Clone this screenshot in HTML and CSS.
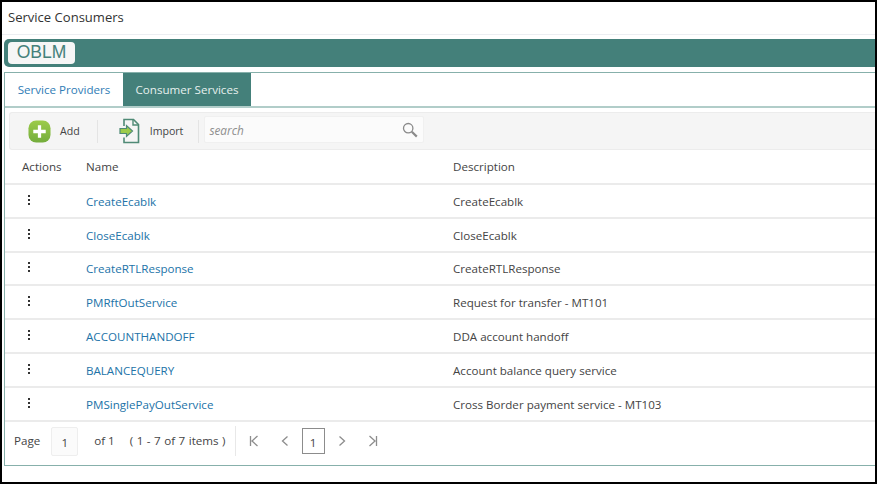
FILE: index.html
```html
<!DOCTYPE html>
<html lang="en">
<head>
<meta charset="utf-8">
<title>Service Consumers</title>
<link rel="stylesheet" href="styles.css">
</head>
<body>
<div class="frame">
  <header class="title">Service Consumers</header>
  <div class="banner"><span class="logo">OBLM</span></div>
  <section class="panel">
    <nav class="tabs">
      <a class="tab">Service Providers</a>
      <a class="tab active">Consumer Services</a>
    </nav>
    <div class="toolbar">
      <button class="tool tool-add">
        <svg class="ico-add" viewBox="0 0 24 24" width="23" height="23"><defs><linearGradient id="g" x1="0" y1="0" x2="0" y2="1"><stop offset="0" stop-color="#9ccb4a"/><stop offset="1" stop-color="#74ad3c"/></linearGradient></defs><rect x="0.5" y="0.5" width="23" height="23" rx="8" fill="url(#g)"/><path d="M12 5.5v13M5.5 12h13" stroke="#fff" stroke-width="3.4" fill="none"/></svg>
        <span>Add</span>
      </button>
      <i class="sep"></i>
      <button class="tool tool-import">
        <svg viewBox="0 0 21 26" width="21" height="26"><path d="M5 8V1.500h9.500l5 5V24.500H5v-5" fill="none" stroke="#4f8a76" stroke-width="1.600"/><path d="M14 1.500v5.500h5.500" fill="none" stroke="#4f8a76" stroke-width="1.400"/><path d="M1 10.500h6.500V7.500l6 5.500-6 5.500v-3H1z" fill="#9ccb4a" stroke="#4f8a76" stroke-width="1.200"/></svg>
        <span>Import</span>
      </button>
      <i class="sep sep-b"></i>
      <div class="search">
        <span class="placeholder">search</span>
        <svg viewBox="0 0 16 16" width="16" height="16"><circle cx="6.200" cy="6.200" r="4.700" fill="none" stroke="#8a8a8a" stroke-width="1.300"/><path d="M9.800 9.800l5 4.800" stroke="#8a8a8a" stroke-width="2.200"/></svg>
      </div>
    </div>
    <div class="table">
      <div class="row head"><span>Actions</span><span>Name</span><span>Description</span></div>
      <div class="row"><span class="dots"><i></i><i></i><i></i></span><a>CreateEcablk</a><span>CreateEcablk</span></div>
      <div class="row"><span class="dots"><i></i><i></i><i></i></span><a>CloseEcablk</a><span>CloseEcablk</span></div>
      <div class="row"><span class="dots"><i></i><i></i><i></i></span><a>CreateRTLResponse</a><span>CreateRTLResponse</span></div>
      <div class="row"><span class="dots"><i></i><i></i><i></i></span><a>PMRftOutService</a><span>Request for transfer - MT101</span></div>
      <div class="row"><span class="dots"><i></i><i></i><i></i></span><a>ACCOUNTHANDOFF</a><span>DDA account handoff</span></div>
      <div class="row"><span class="dots"><i></i><i></i><i></i></span><a>BALANCEQUERY</a><span>Account balance query service</span></div>
      <div class="row"><span class="dots"><i></i><i></i><i></i></span><a>PMSinglePayOutService</a><span>Cross Border payment service - MT103</span></div>
    </div>
    <footer class="pager">
      <span class="pg-label">Page</span>
      <span class="pg-input">1</span>
      <span class="pg-of">of 1</span>
      <span class="pg-items">( 1 - 7 of 7 items )</span>
      <i class="pg-sep"></i>
      <svg class="nav nav-first" viewBox="0 0 10 12" width="10" height="12"><path d="M1.500 1v10M8.500 1L3 6l5.500 5" fill="none" stroke="#8d8d8d" stroke-width="1.300"/></svg>
      <svg class="nav nav-prev" viewBox="0 0 8 12" width="8" height="12"><path d="M6.500 1.500L1.500 6l5 4.500" fill="none" stroke="#8d8d8d" stroke-width="1.300"/></svg>
      <span class="pg-current">1</span>
      <svg class="nav nav-next" viewBox="0 0 8 12" width="8" height="12"><path d="M1.500 1.500L6.500 6l-5 4.500" fill="none" stroke="#8d8d8d" stroke-width="1.300"/></svg>
      <svg class="nav nav-last" viewBox="0 0 10 12" width="10" height="12"><path d="M8.500 1v10M1.500 1L7 6l-5.500 5" fill="none" stroke="#8d8d8d" stroke-width="1.300"/></svg>
    </footer>
  </section>
</div>
</body>
</html>
```
FILE: styles.css
```css
* { box-sizing: border-box; }
html, body { margin: 0; padding: 0; background: #fff; }
body { width: 877px; height: 484px; overflow: hidden; font-family: "Open Sans", "Noto Sans", sans-serif; font-size: 11.600px; color: #3c3c3c; }
.frame { width: 877px; height: 484px; border: 2px solid #000; overflow: hidden; }
.title { height: 33px; border-bottom: 1px solid #eceef2; padding: 6px 0 0 6px; font-size: 13.050px; line-height: 18px; color: #333; }
.banner { margin: 4px 0 0 2px; height: 28px; background: #44807a; border-radius: 5px 0 0 5px; padding: 3px 0 0 4px; }
.logo { display: block; width: 67px; height: 22px; background: #f6f6f6; border-radius: 4px; color: #44807a; font-family: "Liberation Sans", Arial, sans-serif; font-size: 17.500px; line-height: 21px; text-align: center; }
.panel { margin: 5px 0 0 2px; height: 394px; border: 1px solid #87b0ab; border-right: 0; }
.tabs { display: flex; height: 35px; border-bottom: 2px solid #b1cdc9; }
.tab { width: 118px; height: 33px; line-height: 34px; text-align: center; color: #2f7cb5; }
.tab.active { width: 128px; background: #44807a; color: #e6f0ee; }
.toolbar { display: flex; align-items: center; height: 38px; margin: 4px 0 0 4px; background: #f5f5f5; border: 1px solid #ececec; border-right: 0; border-radius: 3px 0 0 3px; font-size: 10.600px; }
.tool { display: flex; align-items: center; border: 0; background: none; padding: 0; font: inherit; color: #444; }
.tool-add { margin-left: 18px; gap: 9px; }
.tool-import { margin-left: 21px; gap: 10px; }
.sep { width: 1px; height: 23px; background: #e4e4e4; margin-left: 17px; }
.sep-b { margin-left: 15px; }
.search { display: flex; align-items: center; justify-content: space-between; width: 220px; height: 27px; margin: -3px 0 0 5px; padding: 0 5px 0 4px; background: #fbfbfb; border: 1px solid #f0f0f0; border-radius: 2px; }
.placeholder { color: #8f8f8f; font-style: italic; font-size: 11.800px; }
.table { display: flex; flex-direction: column; }
.row { display: grid; grid-template-columns: 64px 367px 1fr; align-items: center; height: 33.800px; padding: 1px 0 0 17px; border-bottom: 2px solid #ebebeb; color: #444; }
.row.head { height: 35px; padding-top: 0; }
.row a { color: #2273a8; }
.dots { display: flex; flex-direction: column; gap: 2px; padding-left: 6px; margin-top: -3px; }
.dots i { width: 2px; height: 2px; background: #333; }
.pager { display: flex; align-items: center; height: 42px; padding-bottom: 3px; color: #444; }
.pg-label { margin: 0 0 2px 9px; }
.pg-input { width: 27px; height: 29px; margin-left: 11px; background: #fbfbfb; border: 1px solid #eee; border-radius: 2px; text-align: center; line-height: 30px; }
.pg-of { margin: 0 0 2px 16px; }
.pg-items { margin: 0 0 2px 15px; word-spacing: 0.500px; }
.pg-sep { width: 1px; height: 30px; background: #e8e8e8; margin-left: 9px; }
.nav { flex: none; }
.nav-first { margin-left: 13px; }
.nav-prev { margin-left: 22px; }
.pg-current { width: 23px; height: 26px; margin-left: 13px; border: 1px solid #8c8c8c; text-align: center; line-height: 27px; }
.nav-next { margin-left: 13px; }
.nav-last { margin-left: 22px; }
```
